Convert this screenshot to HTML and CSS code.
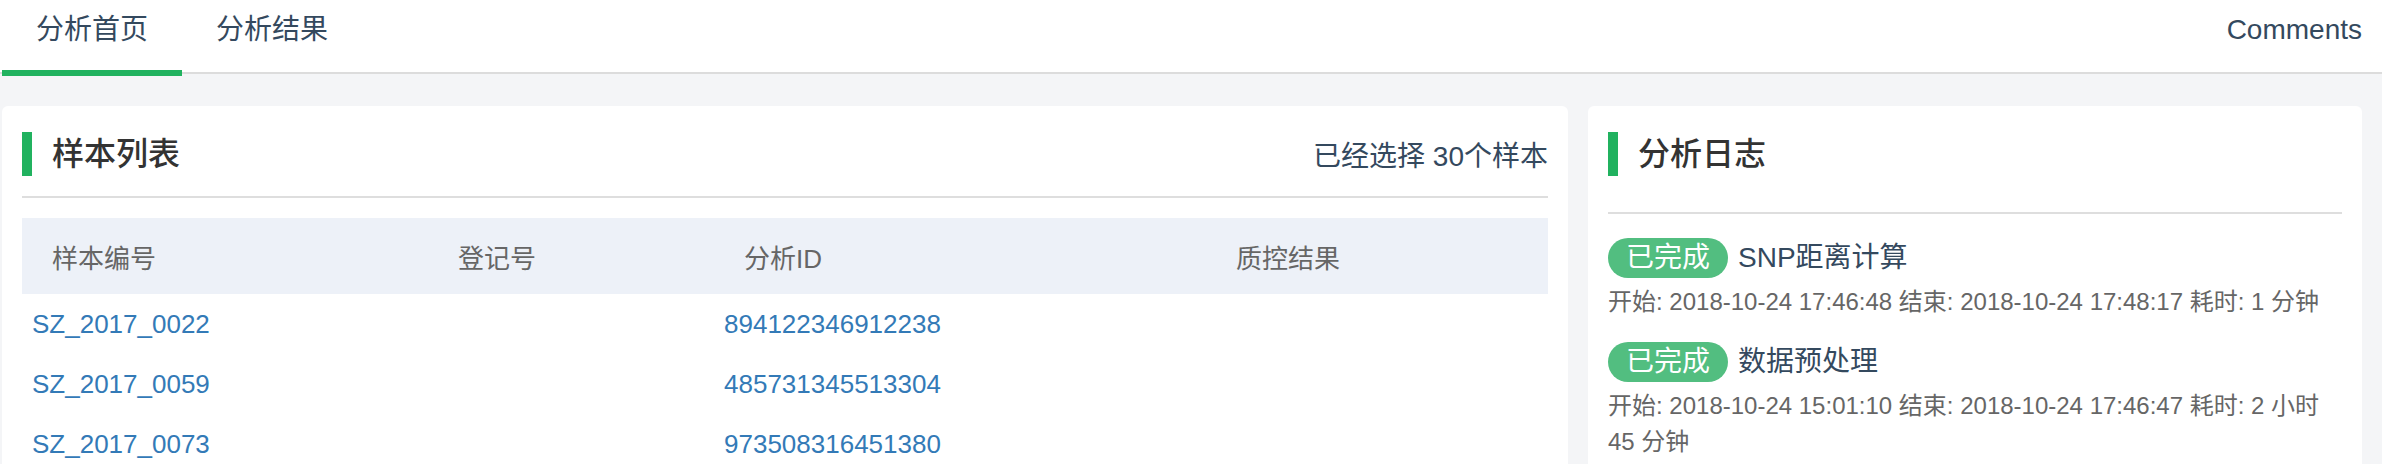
FILE: index.html
```html
<!doctype html>
<html lang="zh-CN">
  <head>
    <meta charset="utf-8">
    <meta name="viewport" content="width=device-width,initial-scale=1">
    <title>分析首页</title>
    <link rel="stylesheet" href="styles.css">
  </head>

  <body>
    <header class="topbar">
      <nav class="tabs">
        <a class="tab active" href="#">分析首页</a>
        <a class="tab" href="#">分析结果</a>
      </nav>
      <a class="comments" href="#">Comments</a>
    </header>

    <main class="board">
      <section class="card samples">
        <div class="card-head">
          <h2>样本列表</h2>
          <span class="picked">已经选择 30个样本</span>
        </div>

        <table class="sample-table">
          <colgroup>
            <col class="col-no">
            <col class="col-reg">
            <col class="col-id">
            <col>
          </colgroup>
          <thead>
            <tr>
              <th>样本编号</th>
              <th>登记号</th>
              <th>分析ID</th>
              <th>质控结果</th>
            </tr>
          </thead>
          <tbody>
            <tr>
              <td><a href="#">SZ_2017_0022</a></td>
              <td></td>
              <td><a href="#">894122346912238</a></td>
              <td></td>
            </tr>
            <tr>
              <td><a href="#">SZ_2017_0059</a></td>
              <td></td>
              <td><a href="#">485731345513304</a></td>
              <td></td>
            </tr>
            <tr>
              <td><a href="#">SZ_2017_0073</a></td>
              <td></td>
              <td><a href="#">973508316451380</a></td>
              <td></td>
            </tr>
          </tbody>
        </table>
      </section>

      <section class="card log">
        <div class="card-head">
          <h2>分析日志</h2>
        </div>

        <ul class="log-list">
          <li>
            <div class="log-title"><span class="badge">已完成</span>SNP距离计算</div>
            <p class="log-meta">开始: 2018-10-24 17:46:48 结束: 2018-10-24 17:48:17 耗时: 1 分钟</p>
          </li>
          <li>
            <div class="log-title"><span class="badge">已完成</span>数据预处理</div>
            <p class="log-meta">开始: 2018-10-24 15:01:10 结束: 2018-10-24 17:46:47 耗时: 2 小时 45 分钟</p>
          </li>
        </ul>
      </section>
    </main>
  </body>
</html>
```

FILE: styles.css
```css
body {
  margin: 0;
  font-family: "Liberation Sans", "Noto Sans CJK SC", sans-serif;
  color: #34495e;
  background: #f4f5f7;
  -webkit-font-smoothing: antialiased;
}

a {
  text-decoration: none;
}

/* top navigation */

.topbar {
  display: flex;
  align-items: flex-start;
  height: 72px;
  padding: 0 20px 0 2px;
  background: #fff;
  border-bottom: 2px solid #dcdcdc;
}

.tabs {
  display: flex;
}

.tab {
  display: block;
  height: 70px;
  padding: 0 34px;
  font-size: 28px;
  line-height: 60px;
  color: #34495e;
}

.tab.active {
  border-bottom: 6px solid #21b25f;
}

.comments {
  margin-left: auto;
  font-size: 28px;
  line-height: 60px;
  color: #34495e;
}

/* cards */

.board {
  display: grid;
  grid-template-columns: 1566px 774px;
  gap: 20px;
  align-items: start;
  padding: 32px 20px 0 2px;
}

.card {
  background: #fff;
  border-radius: 6px;
  padding: 26px 20px 20px;
}

.card-head {
  display: flex;
  align-items: center;
  justify-content: space-between;
  padding-bottom: 20px;
  border-bottom: 2px solid #dedede;
}

.card-head h2 {
  margin: 0;
  padding-left: 20px;
  border-left: 10px solid #21b25f;
  font-size: 32px;
  line-height: 44px;
  font-weight: 500;
  color: #333;
}

.picked {
  font-size: 28px;
  color: #34495e;
}

/* sample table */

.sample-table {
  width: 100%;
  margin-top: 20px;
  border-collapse: collapse;
  table-layout: fixed;
}

.col-no {
  width: 406px;
}

.col-reg {
  width: 286px;
}

.col-id {
  width: 492px;
}

.sample-table th {
  height: 76px;
  padding: 0 0 0 30px;
  background: #edf1f8;
  font-size: 26px;
  font-weight: normal;
  text-align: left;
  color: #666;
}

.sample-table td {
  height: 60px;
  padding: 0 0 0 10px;
  font-size: 26px;
}

.sample-table td a {
  color: #337ab7;
}

/* analysis log */

.log .card-head {
  padding-bottom: 36px;
}

.log-list {
  list-style: none;
  margin: 0;
  padding: 24px 0 0;
}

.log-list li {
  margin-bottom: 22px;
}

.log-title {
  display: flex;
  align-items: center;
  font-size: 28px;
  line-height: 40px;
  color: #34495e;
}

.badge {
  margin-right: 10px;
  padding: 0 18px;
  border-radius: 20px;
  background: #52be80;
  color: #fff;
}

.log-meta {
  margin: 6px 0 0;
  font-size: 24px;
  line-height: 36px;
  color: #666;
}
```
